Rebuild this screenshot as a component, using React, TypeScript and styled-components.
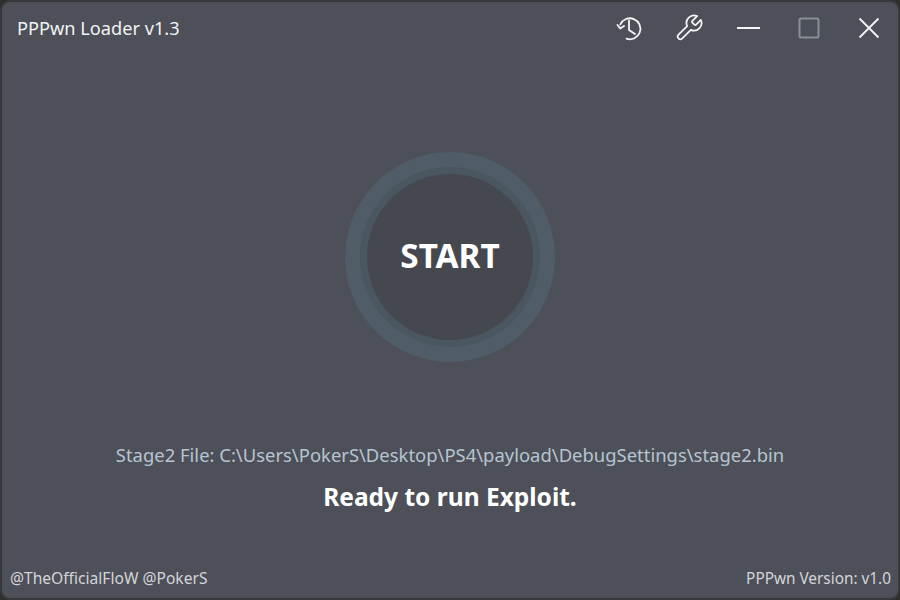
import React from 'react';
import styled, { createGlobalStyle } from 'styled-components';

const GlobalStyle = createGlobalStyle`
  html, body {
    margin: 0;
    padding: 0;
    background: #2e2e2e;
  }
  body {
    font-family: "Noto Sans", "Open Sans", "Liberation Sans", sans-serif;
  }
`;

const Window = styled.div`
  width: 900px;
  height: 600px;
  box-sizing: border-box;
  border: 2px solid #37383c;
  border-radius: 10px;
  background-color: #4d5058;
  display: flex;
  flex-direction: column;
  overflow: hidden;
`;

const TitleBar = styled.div`
  height: 52px;
  flex: none;
  display: flex;
  align-items: center;
  justify-content: space-between;
  padding: 0 14px 0 15px;
`;

const Title = styled.span`
  font-size: 18.2px;
  color: #f2f3f4;
`;

const Tools = styled.div`
  display: flex;
  align-items: center;
  gap: 30px;
`;

const ToolIcon = styled.svg<{ $dim?: boolean; $weight?: number }>`
  display: block;
  width: 30px;
  height: 30px;
  fill: none;
  stroke: ${(p) => (p.$dim ? '#8b8e94' : '#f4f5f6')};
  stroke-width: ${(p) => p.$weight ?? 1.8};
  stroke-linecap: round;
  stroke-linejoin: round;
`;

const Main = styled.div`
  flex: 1;
  display: flex;
  flex-direction: column;
  align-items: center;
  padding-top: 98px;
`;

const OuterRing = styled.div`
  width: 210px;
  height: 210px;
  border-radius: 50%;
  background-color: #505c68;
  display: flex;
  align-items: center;
  justify-content: center;
`;

const MiddleRing = styled.div`
  width: 180px;
  height: 180px;
  border-radius: 50%;
  background-color: #4a5660;
  display: flex;
  align-items: center;
  justify-content: center;
`;

const StartButton = styled.div`
  width: 166px;
  height: 166px;
  box-sizing: border-box;
  padding-bottom: 4px;
  border-radius: 50%;
  background-color: #46484f;
  color: #fff;
  font-size: 33.3px;
  font-weight: 700;
  display: flex;
  align-items: center;
  justify-content: center;
`;

const FilePath = styled.div`
  margin-top: 80px;
  font-size: 18.45px;
  line-height: 26px;
  color: #b6c4d2;
`;

const Status = styled.div`
  margin-top: 13px;
  font-size: 24.5px;
  line-height: 32px;
  font-weight: 700;
  color: #fff;
`;

const Footer = styled.div`
  height: 40px;
  flex: none;
  display: flex;
  align-items: center;
  justify-content: space-between;
  padding: 0 7px 0 8px;
  color: #d4d5d8;
`;

const FooterText = styled.span<{ $size: number }>`
  font-size: ${(p) => p.$size}px;
`;

const App = () => (
  <>
    <GlobalStyle />
    <Window>
      <TitleBar>
        <Title>PPPwn Loader v1.3</Title>
        <Tools>
          <ToolIcon viewBox="0 0 30 30">
            <path d="M6.3 11.5A10.5 10.5 0 1 1 12.5 25.7" />
            <path d="M3.5 12l2.7 3.5L10 13" />
            <path d="M15 7.5V17l6 4" />
          </ToolIcon>
          <ToolIcon viewBox="0 0 24 24" $weight={1.4}>
            <path d="M14.7 6.3a1 1 0 0 0 0 1.4l1.6 1.6a1 1 0 0 0 1.4 0l3.77-3.77a6 6 0 0 1-7.94 7.94l-6.91 6.91a2.12 2.12 0 0 1-3-3l6.91-6.91a6 6 0 0 1 7.94-7.94l-3.76 3.76z" />
          </ToolIcon>
          <ToolIcon viewBox="0 0 30 30">
            <path d="M3 15h23" strokeLinecap="butt" />
          </ToolIcon>
          <ToolIcon viewBox="0 0 30 30" $dim $weight={2}>
            <rect x="5.5" y="5.5" width="19" height="19" rx="1.5" />
          </ToolIcon>
          <ToolIcon viewBox="0 0 30 30">
            <path d="M5.5 5.5l19 19M24.5 5.5l-19 19" strokeLinecap="butt" />
          </ToolIcon>
        </Tools>
      </TitleBar>
      <Main>
        <OuterRing>
          <MiddleRing>
            <StartButton>START</StartButton>
          </MiddleRing>
        </OuterRing>
        <FilePath>{'Stage2 File: C:\\Users\\PokerS\\Desktop\\PS4\\payload\\DebugSettings\\stage2.bin'}</FilePath>
        <Status>Ready to run Exploit.</Status>
      </Main>
      <Footer>
        <FooterText $size={15.6}>@TheOfficialFloW @PokerS</FooterText>
        <FooterText $size={15.35}>PPPwn Version: v1.0</FooterText>
      </Footer>
    </Window>
  </>
);

export default App;
